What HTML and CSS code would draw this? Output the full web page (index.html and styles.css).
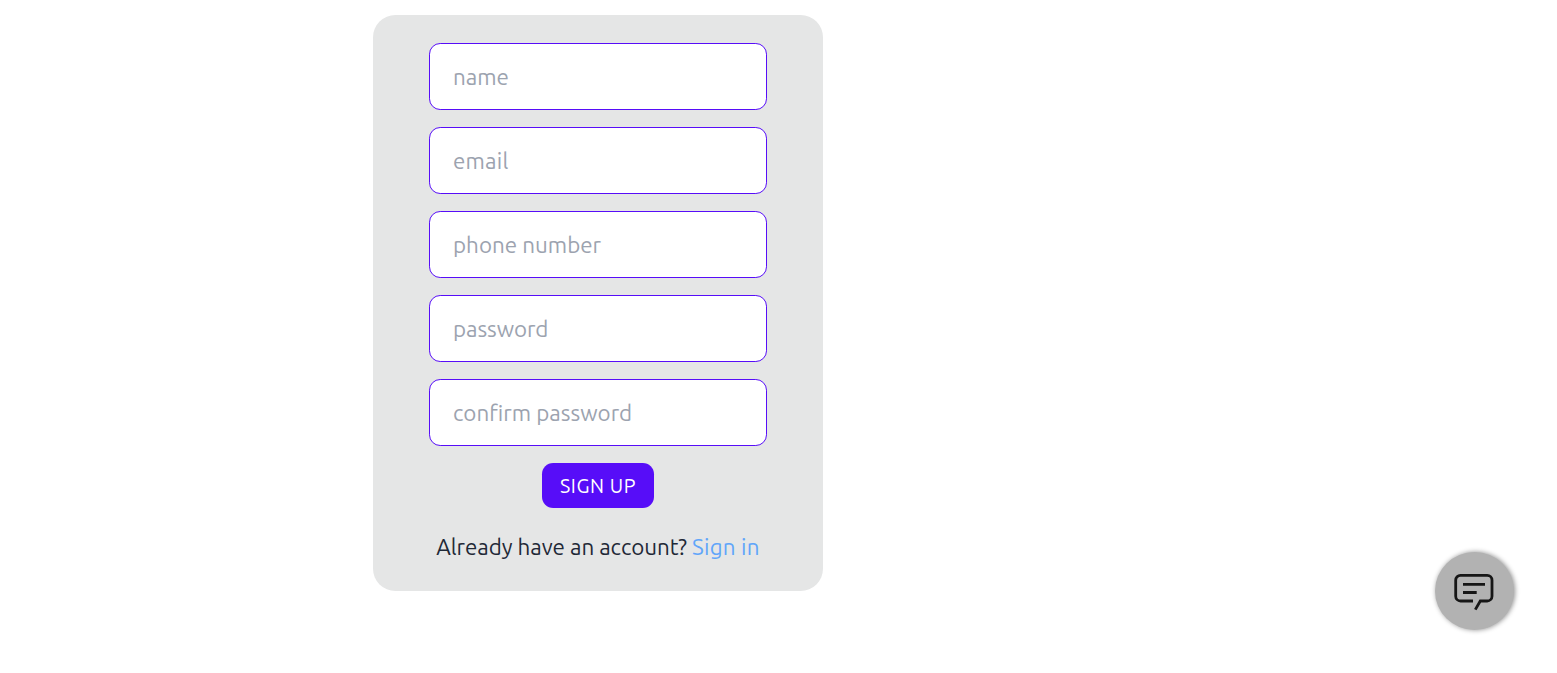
FILE: index.html
```html
<!DOCTYPE html>
<html lang="en">
<head>
<meta charset="utf-8">
<title>Sign up</title>
<link rel="stylesheet" href="styles.css">
</head>
<body>
<main class="page">
  <form class="card">
    <input class="field" type="text" placeholder="name">
    <input class="field" type="email" placeholder="email">
    <input class="field" type="tel" placeholder="phone number">
    <input class="field field-password" type="password" placeholder="password">
    <input class="field" type="password" placeholder="confirm password">
    <button class="submit" type="button">SIGN UP</button>
    <p class="switch">Already have an account? <a class="link" href="#">Sign in</a></p>
  </form>
</main>
<button class="chat" type="button" aria-label="Chat">
  <svg class="chat-icon" width="40" height="38" viewBox="0 0 40 38" fill="none" stroke="#161616" stroke-width="2.8">
    <path d="M19 28H6.500a4.800 4.800 0 0 1-4.800-4.800V7.200a4.800 4.800 0 0 1 4.800-4.800h26.700a4.800 4.800 0 0 1 4.800 4.800v16a4.800 4.800 0 0 1-4.800 4.800H26.300L21.300 36.600"/>
    <path d="M9 11.300H31M9 19.500H22.700"/>
  </svg>
</button>
</body>
</html>
```
FILE: styles.css
```css
* { box-sizing: border-box; }
body {
  margin: 0;
  height: 673px;
  overflow: hidden;
  background: #fff;
  font-family: Ubuntu, "Noto Sans", sans-serif;
}
.page { padding: 15px 0 0 373px; }
.card {
  display: flex;
  flex-direction: column;
  align-items: center;
  width: 450px;
  height: 576px;
  padding-top: 28px;
  border-radius: 22.4px;
  background: #e5e6e6;
}
.field {
  width: 338px;
  height: 67px;
  margin: 0 0 17px;
  padding: 0 23px;
  border: 1px solid #570df8;
  border-radius: 11.2px;
  background: #fff;
  color: #1f2937;
  font-family: inherit;
  font-size: 22.4px;
}
.field[type="email"] { letter-spacing: 0.2px; }
.field-password { letter-spacing: -0.1px; }
.field::placeholder { color: #9ca3af; opacity: 1; }
.submit {
  width: 112px;
  height: 45px;
  padding: 0;
  border: 0;
  border-radius: 11.2px;
  background: #570df8;
  color: #fff;
  font-family: inherit;
  font-size: 19.6px;
  letter-spacing: 0.6px;
  white-space: nowrap;
}
.switch {
  margin: 22px 0 0;
  color: #1f2937;
  font-size: 22.4px;
  line-height: 34px;
  letter-spacing: -0.06px;
  white-space: nowrap;
}
.link { color: #60a5fa; text-decoration: none; letter-spacing: 0.2px; }
.chat {
  position: fixed;
  left: 1435px;
  top: 552px;
  display: flex;
  align-items: flex-start;
  width: 79px;
  height: 78px;
  padding: 21px 0 0 19px;
  border: 0;
  border-radius: 50%;
  background: #b2b2b2;
  box-shadow: 1px 0 5px rgba(0, 0, 0, 0.45);
}
.chat-icon { display: block; flex: none; }
```
